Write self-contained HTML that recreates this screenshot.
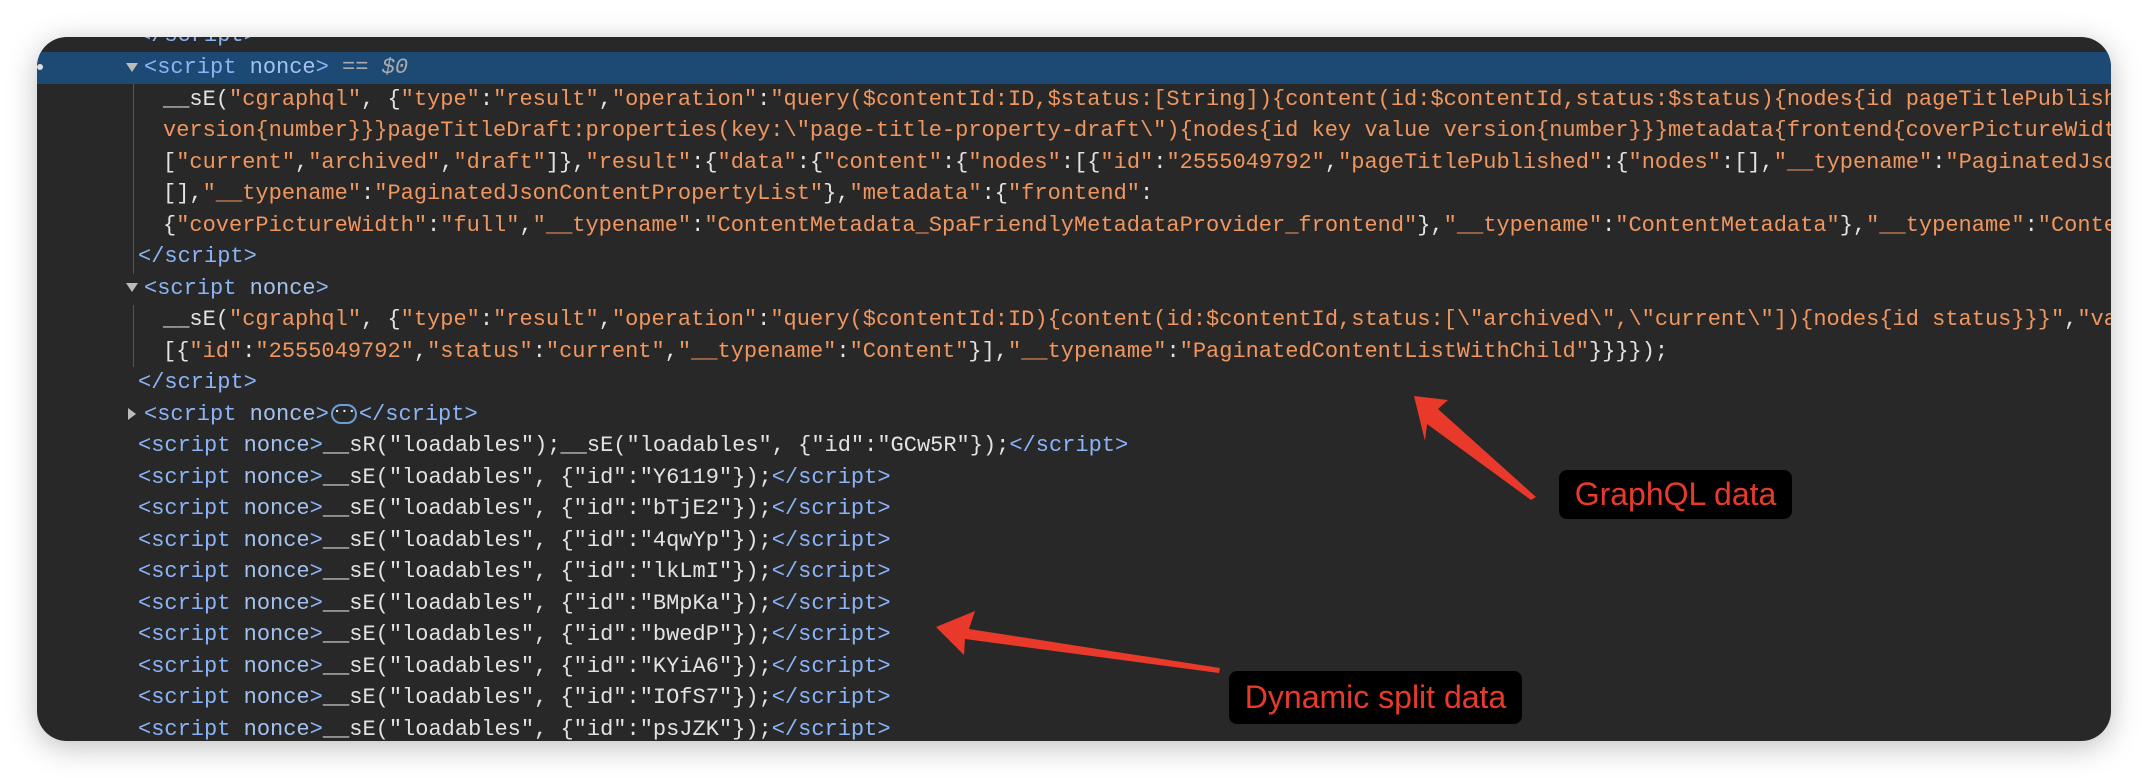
<!DOCTYPE html>
<html><head><meta charset="utf-8">
<style>
html,body{margin:0;padding:0;background:#fff;width:2148px;height:778px;overflow:hidden}
#win{position:absolute;left:37px;top:37px;width:2074px;height:704px;background:#282828;border-radius:30px;overflow:hidden;box-shadow:0 6px 30px rgba(0,0,0,0.25)}
.hl{position:absolute;left:0;top:15px;width:100%;height:32px;background:#1d4a74}
.gut{position:absolute;left:96px;width:1px;background:#555}
.r{position:absolute;left:0;height:31.5px;line-height:31.5px;white-space:pre;font-family:"Liberation Mono",monospace;font-size:22px;color:#e3e3e3}
.t{color:#8ab4f8}.a{color:#a3c2f0}.o{color:#f0965e}.w{color:#e3e3e3}.g{color:#aaa}
.tri{display:inline-block;width:0;height:0;border-left:6px solid transparent;border-right:6px solid transparent;border-top:9px solid #bbb;vertical-align:middle;margin-right:6px}
.tri2{display:inline-block;width:0;height:0;border-top:6px solid transparent;border-bottom:6px solid transparent;border-left:8px solid #bbb;vertical-align:middle;margin-right:8px}
.dots{display:inline-block;width:26px;height:20px;border:2px solid #6a9fd8;border-radius:10px;box-sizing:border-box;vertical-align:middle;color:#dde8f5;font-size:14px;line-height:12px;text-align:center;font-weight:bold;margin:0 2px;letter-spacing:-1px}
.box{position:absolute;background:#000;border-radius:8px;color:#e83a2a;font-family:"Liberation Sans",sans-serif;font-size:32px;text-align:center}
</style></head><body>
<div id="win">
<div class="hl"></div>
<div class="gut" style="top:47px;height:190px"></div>
<div class="gut" style="top:268px;height:62px"></div>
<div style="position:absolute;left:0;top:27px;width:6px;height:6px;background:#ddd;border-radius:3px"></div>

<div class="r t" style="top:-17px;left:101px">&lt;/script&gt;</div>
<div class="r" style="top:15px;left:89px"><span class="tri"></span><span class="t">&lt;script </span><span class="a">nonce</span><span class="t">&gt;</span><span class="g"> == </span><span class="g" style="font-style:italic">$0</span></div>
<div class="r o" style="top:46.5px;left:126px"><span class="w">__sE(</span>"cgraphql"<span class="w">, {</span>"type"<span class="w">:</span>"result"<span class="w">,</span>"operation"<span class="w">:</span>"query($contentId:ID,$status:[String]){content(id:$contentId,status:$status){nodes{id pageTitlePublished:properties(key:\"page-title-property-published\"){nodes{id key value</div>
<div class="r o" style="top:78px;left:126px">version{number}}}pageTitleDraft:properties(key:\"page-title-property-draft\"){nodes{id key value version{number}}}metadata{frontend{coverPictureWidth __typename}}}}}"</div>
<div class="r o" style="top:109.5px;left:126px"><span class="w">[</span>"current"<span class="w">,</span>"archived"<span class="w">,</span>"draft"<span class="w">]},</span>"result"<span class="w">:{</span>"data"<span class="w">:{</span>"content"<span class="w">:{</span>"nodes"<span class="w">:[{</span>"id"<span class="w">:</span>"2555049792"<span class="w">,</span>"pageTitlePublished"<span class="w">:{</span>"nodes"<span class="w">:[],</span>"__typename"<span class="w">:</span>"PaginatedJsonContentPropertyList"</div>
<div class="r o" style="top:141px;left:126px"><span class="w">[],</span>"__typename"<span class="w">:</span>"PaginatedJsonContentPropertyList"<span class="w">},</span>"metadata"<span class="w">:{</span>"frontend"<span class="w">:</span></div>
<div class="r o" style="top:172.5px;left:126px"><span class="w">{</span>"coverPictureWidth"<span class="w">:</span>"full"<span class="w">,</span>"__typename"<span class="w">:</span>"ContentMetadata_SpaFriendlyMetadataProvider_frontend"<span class="w">},</span>"__typename"<span class="w">:</span>"ContentMetadata"<span class="w">},</span>"__typename"<span class="w">:</span>"Content"</div>
<div class="r t" style="top:204px;left:101px">&lt;/script&gt;</div>
<div class="r" style="top:235.5px;left:89px"><span class="tri"></span><span class="t">&lt;script </span><span class="a">nonce</span><span class="t">&gt;</span></div>
<div class="r o" style="top:267px;left:126px"><span class="w">__sE(</span>"cgraphql"<span class="w">, {</span>"type"<span class="w">:</span>"result"<span class="w">,</span>"operation"<span class="w">:</span>"query($contentId:ID){content(id:$contentId,status:[\"archived\",\"current\"]){nodes{id status}}}"<span class="w">,</span>"variables"</div>
<div class="r o" style="top:298.5px;left:126px"><span class="w">[{</span>"id"<span class="w">:</span>"2555049792"<span class="w">,</span>"status"<span class="w">:</span>"current"<span class="w">,</span>"__typename"<span class="w">:</span>"Content"<span class="w">}],</span>"__typename"<span class="w">:</span>"PaginatedContentListWithChild"<span class="w">}}}});</span></div>
<div class="r t" style="top:330px;left:101px">&lt;/script&gt;</div>
<div class="r" style="top:361.5px;left:91px"><span class="tri2"></span><span class="t">&lt;script </span><span class="a">nonce</span><span class="t">&gt;</span><span class="dots">···</span><span class="t">&lt;/script&gt;</span></div>
<div class="r" style="top:393px;left:101px"><span class="t">&lt;script </span><span class="a">nonce</span><span class="t">&gt;</span>__sR("loadables");__sE("loadables", {"id":"GCw5R"});<span class="t">&lt;/script&gt;</span></div>
<div class="r" style="top:424.5px;left:101px"><span class="t">&lt;script </span><span class="a">nonce</span><span class="t">&gt;</span>__sE("loadables", {"id":"Y6119"});<span class="t">&lt;/script&gt;</span></div>
<div class="r" style="top:456px;left:101px"><span class="t">&lt;script </span><span class="a">nonce</span><span class="t">&gt;</span>__sE("loadables", {"id":"bTjE2"});<span class="t">&lt;/script&gt;</span></div>
<div class="r" style="top:487.5px;left:101px"><span class="t">&lt;script </span><span class="a">nonce</span><span class="t">&gt;</span>__sE("loadables", {"id":"4qwYp"});<span class="t">&lt;/script&gt;</span></div>
<div class="r" style="top:519px;left:101px"><span class="t">&lt;script </span><span class="a">nonce</span><span class="t">&gt;</span>__sE("loadables", {"id":"lkLmI"});<span class="t">&lt;/script&gt;</span></div>
<div class="r" style="top:550.5px;left:101px"><span class="t">&lt;script </span><span class="a">nonce</span><span class="t">&gt;</span>__sE("loadables", {"id":"BMpKa"});<span class="t">&lt;/script&gt;</span></div>
<div class="r" style="top:582px;left:101px"><span class="t">&lt;script </span><span class="a">nonce</span><span class="t">&gt;</span>__sE("loadables", {"id":"bwedP"});<span class="t">&lt;/script&gt;</span></div>
<div class="r" style="top:613.5px;left:101px"><span class="t">&lt;script </span><span class="a">nonce</span><span class="t">&gt;</span>__sE("loadables", {"id":"KYiA6"});<span class="t">&lt;/script&gt;</span></div>
<div class="r" style="top:645px;left:101px"><span class="t">&lt;script </span><span class="a">nonce</span><span class="t">&gt;</span>__sE("loadables", {"id":"IOfS7"});<span class="t">&lt;/script&gt;</span></div>
<div class="r" style="top:676.5px;left:101px"><span class="t">&lt;script </span><span class="a">nonce</span><span class="t">&gt;</span>__sE("loadables", {"id":"psJZK"});<span class="t">&lt;/script&gt;</span></div>
</div>

<svg style="position:absolute;left:0;top:0" width="2148" height="778">
<polygon points="1414,396 1448,400 1438,409 1536,497 1531,500 1427,424 1425,441" fill="#e8392a"/>
<polygon points="936,627 975,611 969,629 1220,668 1219,673 965,639 964,655" fill="#e8392a"/>
</svg>
<div class="box" style="left:1559px;top:470px;width:233px;height:49px;line-height:49px">GraphQL data</div>
<div class="box" style="left:1229px;top:671px;width:293px;height:53px;line-height:53px">Dynamic split data</div>
</body></html>
